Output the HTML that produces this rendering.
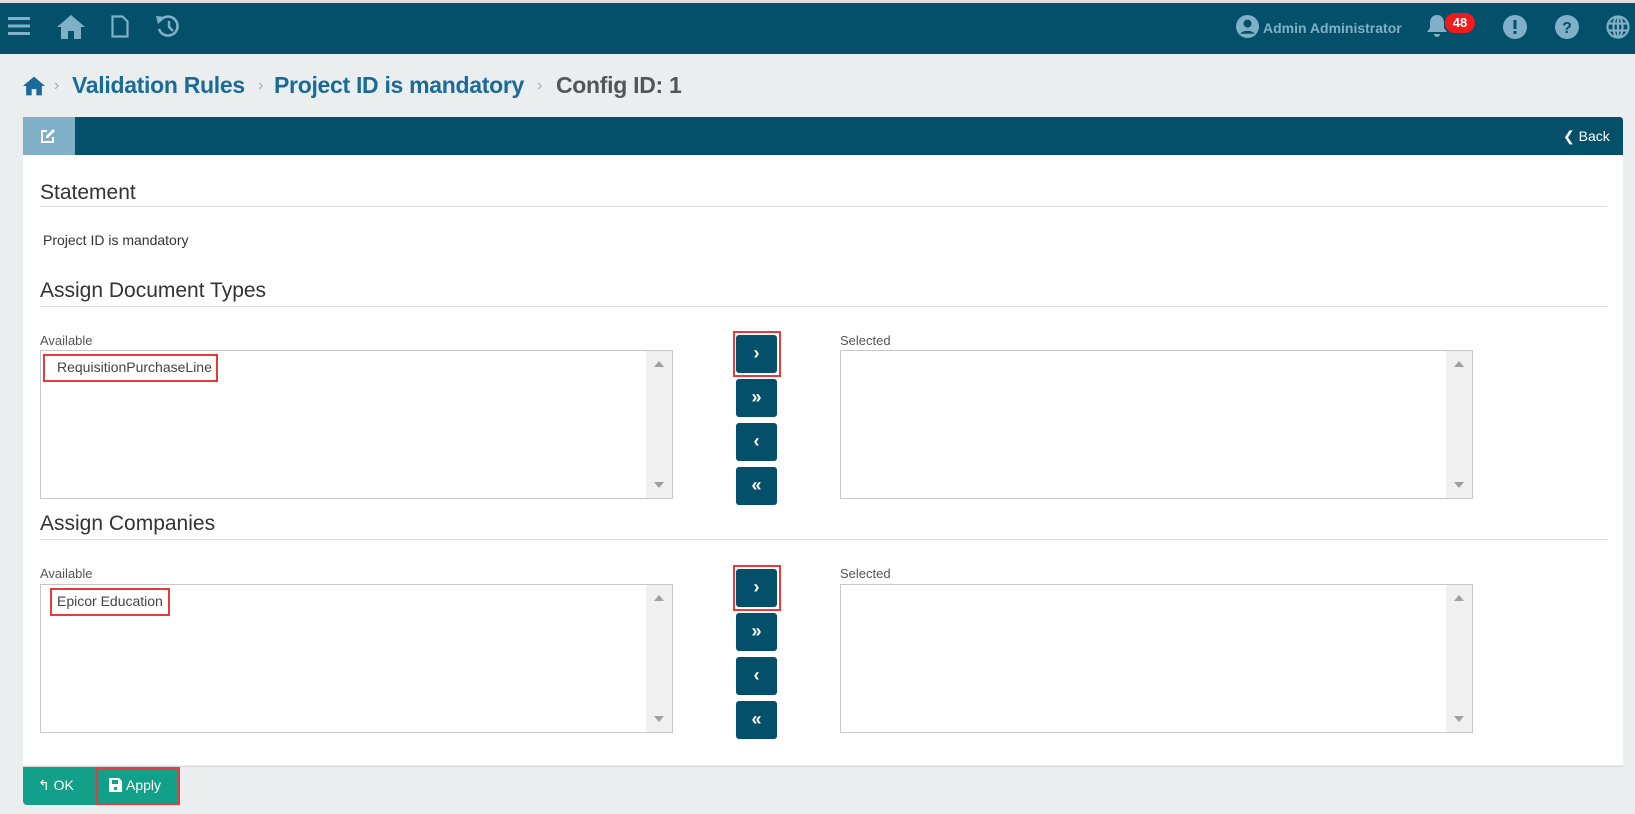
<!DOCTYPE html>
<html><head><meta charset="utf-8"><style>
*{box-sizing:border-box;margin:0;padding:0}
body{width:1635px;height:814px;background:#ebeeef;font-family:"Liberation Sans",sans-serif;position:relative;overflow:hidden;color:#333}
.a{position:absolute}
.top{left:0;top:0;width:1635px;height:3px;background:#dcdcdc}
.hdr{left:0;top:3px;width:1635px;height:51px;background:#04506a}
.bc{top:72px;font-size:23px;font-weight:bold;color:#1a6a9a;letter-spacing:-0.3px}
.sep{top:77px;color:#aaa;font-size:16px}
.panel{left:23px;top:117px;width:1600px;height:648px;background:#fff}
.ph{left:23px;top:117px;width:1600px;height:38px;background:#04506a;border-radius:3px 3px 0 0}
.h{font-size:21px;color:#333;left:40px}
.hr{left:40px;width:1567px;height:1px;background:#dedede}
.lbl{font-size:13px;color:#555}
.lb{border:1px solid #c8c8c8;background:#fff}
.sb{position:absolute;right:0;top:0;bottom:0;width:26px;background:#f0f0f0}
.sb:before{content:"";position:absolute;left:8px;top:10px;border:5px solid transparent;border-bottom:6px solid #a0a0a0;border-top:0}
.sb:after{content:"";position:absolute;left:8px;bottom:10px;border:5px solid transparent;border-top:6px solid #a0a0a0;border-bottom:0}
.btn{left:736px;width:41px;height:38px;background:#04506a;border-radius:3px;color:#fff;font-size:18px;font-weight:bold;text-align:center;line-height:36px}
.red{border:2px solid #e83a3a}
.item{font-size:14px;color:#444}
</style></head><body>
<div class="a top"></div>
<div class="a hdr"></div>
<svg class="a" style="left:8px;top:17px" width="22" height="18"><g fill="#7fb0c8"><rect y="0" width="22" height="3"/><rect y="7.5" width="22" height="3"/><rect y="15" width="22" height="3"/></g></svg>
<svg class="a" style="left:57px;top:15px" width="28" height="24" viewBox="0 0 28 24"><path fill="#7fb0c8" d="M14 0L0 12h4v12h7v-8h6v8h7V12h4z"/></svg>
<svg class="a" style="left:111px;top:15px" width="18" height="23" viewBox="0 0 18 23"><path fill="none" stroke="#7fb0c8" stroke-width="2.2" d="M1.5 1.5h10l5 5v15h-15z"/></svg>
<svg class="a" style="left:155px;top:14px" width="26" height="25" viewBox="0 0 26 25"><path fill="none" stroke="#7fb0c8" stroke-width="2.6" d="M5 7a9.5 9.5 0 1 1-1 8"/><path fill="#7fb0c8" d="M1 2l9 1-7 7z"/><path stroke="#7fb0c8" stroke-width="2.4" fill="none" d="M14 7v6l4 4"/></svg>
<svg class="a" style="left:1236px;top:15px" width="23" height="23" viewBox="0 0 24 24"><circle cx="12" cy="12" r="12" fill="#7fb0c8"/><circle cx="12" cy="9" r="4.2" fill="#04506a"/><path d="M4.5 19.5c2-4 13-4 15 0" fill="#04506a"/></svg>
<div class="a" style="left:1263px;top:20px;font-size:14px;font-weight:bold;color:#7fb0c8">Admin Administrator</div>
<svg class="a" style="left:1426px;top:14px" width="22" height="24" viewBox="0 0 22 24"><path fill="#7fb0c8" d="M11 1c-5 0-7 4-7 8v5l-3 4h20l-3-4V9c0-4-2-8-7-8zM8 20h6a3 3 0 0 1-6 0z"/></svg>
<div class="a" style="left:1445px;top:13px;width:30px;height:20px;background:#f01c1c;border-radius:10px;color:#fff;font-size:13px;font-weight:bold;text-align:center;line-height:20px">48</div>
<svg class="a" style="left:1503px;top:15px" width="24" height="24"><circle cx="12" cy="12" r="12" fill="#7fb0c8"/><rect x="10.5" y="5" width="3" height="9" fill="#04506a"/><rect x="10.5" y="16" width="3" height="3" fill="#04506a"/></svg>
<svg class="a" style="left:1555px;top:15px" width="24" height="24"><circle cx="12" cy="12" r="12" fill="#7fb0c8"/><text x="12" y="18" text-anchor="middle" font-family="Liberation Sans" font-weight="bold" font-size="16" fill="#04506a">?</text></svg>
<svg class="a" style="left:1606px;top:15px" width="24" height="24" viewBox="0 0 24 24"><g fill="none" stroke="#7fb0c8" stroke-width="2.2"><circle cx="12" cy="12" r="10.5"/><ellipse cx="12" cy="12" rx="4.5" ry="10.5"/><path d="M1.5 8.5h21M1.5 15.5h21M12 1.5v21"/></g></svg>

<svg class="a" style="left:23px;top:76px" width="22" height="20" viewBox="0 0 28 24"><path fill="#1a6a9a" d="M14 0L0 12h4v12h7v-8h6v8h7V12h4z"/></svg>
<div class="a sep" style="left:54px">›</div>
<div class="a bc" style="left:72px">Validation Rules</div>
<div class="a sep" style="left:258px">›</div>
<div class="a bc" style="left:274px">Project ID is mandatory</div>
<div class="a sep" style="left:537px">›</div>
<div class="a bc" style="left:556px;color:#555">Config ID: 1</div>

<div class="a panel"></div>
<div class="a ph"></div>
<div class="a" style="left:23px;top:117px;width:52px;height:38px;background:#7fb0c8"></div>
<svg class="a" style="left:40px;top:128px" width="16" height="16" viewBox="0 0 16 16"><path fill="none" stroke="#fff" stroke-width="2" d="M7 3H2v11h11V9"/><path fill="#fff" d="M13 1l2 2-7 7H6V8z"/></svg>
<div class="a" style="left:1563px;top:128px;color:#fff;font-size:14px">❮ Back</div>

<div class="a h" style="top:181px">Statement</div>
<div class="a hr" style="top:206px"></div>
<div class="a item" style="left:43px;top:232px;color:#333">Project ID is mandatory</div>
<div class="a h" style="top:279px">Assign Document Types</div>
<div class="a hr" style="top:306px"></div>
<div class="a lbl" style="left:40px;top:333px">Available</div>
<div class="a lb" style="left:40px;top:350px;width:633px;height:149px"><div class="sb"></div></div>
<div class="a red" style="left:43px;top:354px;width:175px;height:28px"></div>
<div class="a item" style="left:57px;top:359px">RequisitionPurchaseLine</div>
<div class="a lbl" style="left:840px;top:333px">Selected</div>
<div class="a lb" style="left:840px;top:350px;width:633px;height:149px"><div class="sb"></div></div>
<div class="a red" style="left:733px;top:331px;width:48px;height:46px"></div>
<div class="a btn" style="top:335px">›</div>
<div class="a btn" style="top:379px">»</div>
<div class="a btn" style="top:423px">‹</div>
<div class="a btn" style="top:467px">«</div>

<div class="a h" style="top:512px">Assign Companies</div>
<div class="a hr" style="top:539px"></div>
<div class="a lbl" style="left:40px;top:566px">Available</div>
<div class="a lb" style="left:40px;top:584px;width:633px;height:149px"><div class="sb"></div></div>
<div class="a red" style="left:50px;top:588px;width:120px;height:28px"></div>
<div class="a item" style="left:57px;top:593px">Epicor Education</div>
<div class="a lbl" style="left:840px;top:566px">Selected</div>
<div class="a lb" style="left:840px;top:584px;width:633px;height:149px"><div class="sb"></div></div>
<div class="a red" style="left:733px;top:565px;width:48px;height:46px"></div>
<div class="a btn" style="top:569px">›</div>
<div class="a btn" style="top:613px">»</div>
<div class="a btn" style="top:657px">‹</div>
<div class="a btn" style="top:701px">«</div>

<div class="a" style="left:23px;top:766px;width:1600px;height:1px;background:#d8d8d8"></div>
<div class="a" style="left:23px;top:767px;width:156px;height:38px;background:#13a08a;border-radius:0 0 0 4px"></div>
<div class="a red" style="left:96px;top:767px;width:84px;height:38px"></div>
<div class="a" style="left:38px;top:777px;color:#fff;font-size:14px">↰ OK</div>
<svg class="a" style="left:109px;top:778px" width="13" height="14" viewBox="0 0 13 14"><path fill="#fff" d="M0 0h10l3 3v11H0z"/><rect x="3" y="2" width="6" height="4" fill="#13a08a"/><rect x="5" y="9" width="3" height="3" fill="#13a08a"/></svg>
<div class="a" style="left:126px;top:777px;color:#fff;font-size:14px">Apply</div>
</body></html>
